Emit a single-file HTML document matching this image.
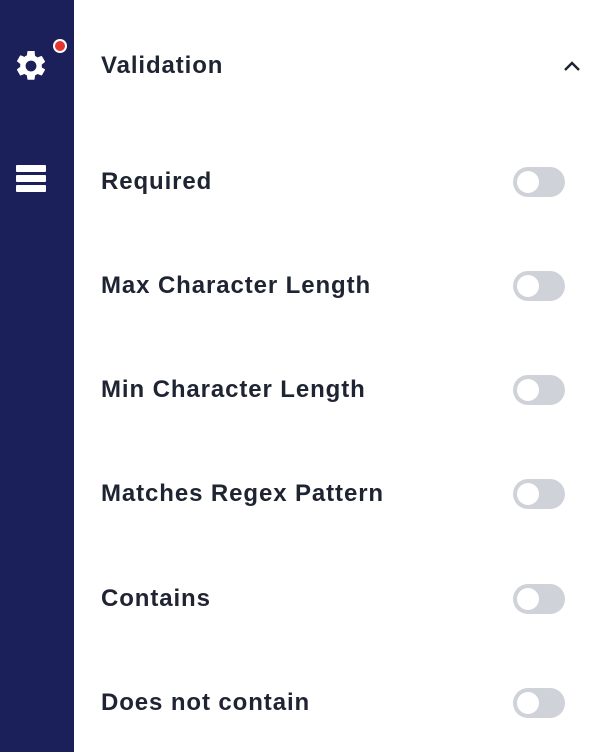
<!DOCTYPE html>
<html><head><style>
body{margin:0;width:594px;height:752px;background:#fff;font-family:"Liberation Sans",sans-serif;position:relative;overflow:hidden}
.side{position:absolute;left:0;top:0;width:74px;height:752px;background:#1b1f5a}
.lbl{position:absolute;left:101px;font-size:24px;letter-spacing:0.9px;font-weight:bold;color:#1f2433;line-height:1;transform:translateY(-50%);white-space:nowrap}
.tg{position:absolute;left:513px;width:52px;height:30px;border-radius:15px;background:#cfd3d9;transform:translateY(-50%)}
.tg:after{content:"";position:absolute;left:4px;top:4px;width:22px;height:22px;border-radius:50%;background:#fff}
.bar{position:absolute;left:16px;width:30px;height:7px;background:#fff;border-radius:1px}
</style></head><body>
<div class="side">
<svg style="position:absolute;left:13px;top:48px" width="36" height="36" viewBox="0 0 24 24"><path fill="#fff" d="M19.14 12.94c.04-.3.06-.61.06-.94s-.02-.64-.07-.94l2.03-1.58a.5.5 0 0 0 .12-.61l-1.92-3.32a.5.5 0 0 0-.59-.22l-2.39.96a7 7 0 0 0-1.620-.94l-.36-2.54A.48.48 0 0 0 13.92 2h-3.84a.47.47 0 0 0-.47.41l-.36 2.54c-.59.24-1.130.57-1.62.94l-2.39-.96a.48.48 0 0 0-.59.22L2.74 8.47a.47.47 0 0 0 .12.61l2.03 1.58c-.05.3-.09.63-.09.94s.02.64.07.94l-2.030 1.58a.5.5 0 0 0-.12.61l1.92 3.32c.12.22.37.29.59.22l2.39-.96c.5.38 1.03.7 1.62.94l.36 2.54c.05.24.24.41.48.41h3.84c.24 0 .44-.17.47-.41l.36-2.54c.59-.24 1.13-.56 1.62-.94l2.39.96c.22.08.47 0 .59-.22l1.92-3.32a.47.47 0 0 0-.12-.61zM12 15.6A3.6 3.6 0 1 1 12 8.4a3.6 3.6 0 0 1 0 7.2z"/></svg>
<div style="position:absolute;left:53px;top:39px;width:10px;height:10px;border-radius:50%;background:#e3342f;border:2px solid #fff"></div>
<div class="bar" style="top:165px"></div><div class="bar" style="top:175px"></div><div class="bar" style="top:185px"></div>
</div>
<div class="lbl" style="top:66px">Validation</div>
<svg style="position:absolute;left:562px;top:59px" width="20" height="14" viewBox="0 0 20 14"><path d="M3 11 L10 4 L17 11" fill="none" stroke="#1f2433" stroke-width="2.4"/></svg>
<div class="lbl" style="top:182px">Required</div><div class="tg" style="top:182px"></div>
<div class="lbl" style="top:286px">Max Character Length</div><div class="tg" style="top:286px"></div>
<div class="lbl" style="top:390px">Min Character Length</div><div class="tg" style="top:390px"></div>
<div class="lbl" style="top:494px">Matches Regex Pattern</div><div class="tg" style="top:494px"></div>
<div class="lbl" style="top:599px">Contains</div><div class="tg" style="top:599px"></div>
<div class="lbl" style="top:703px">Does not contain</div><div class="tg" style="top:703px"></div>
</body></html>
